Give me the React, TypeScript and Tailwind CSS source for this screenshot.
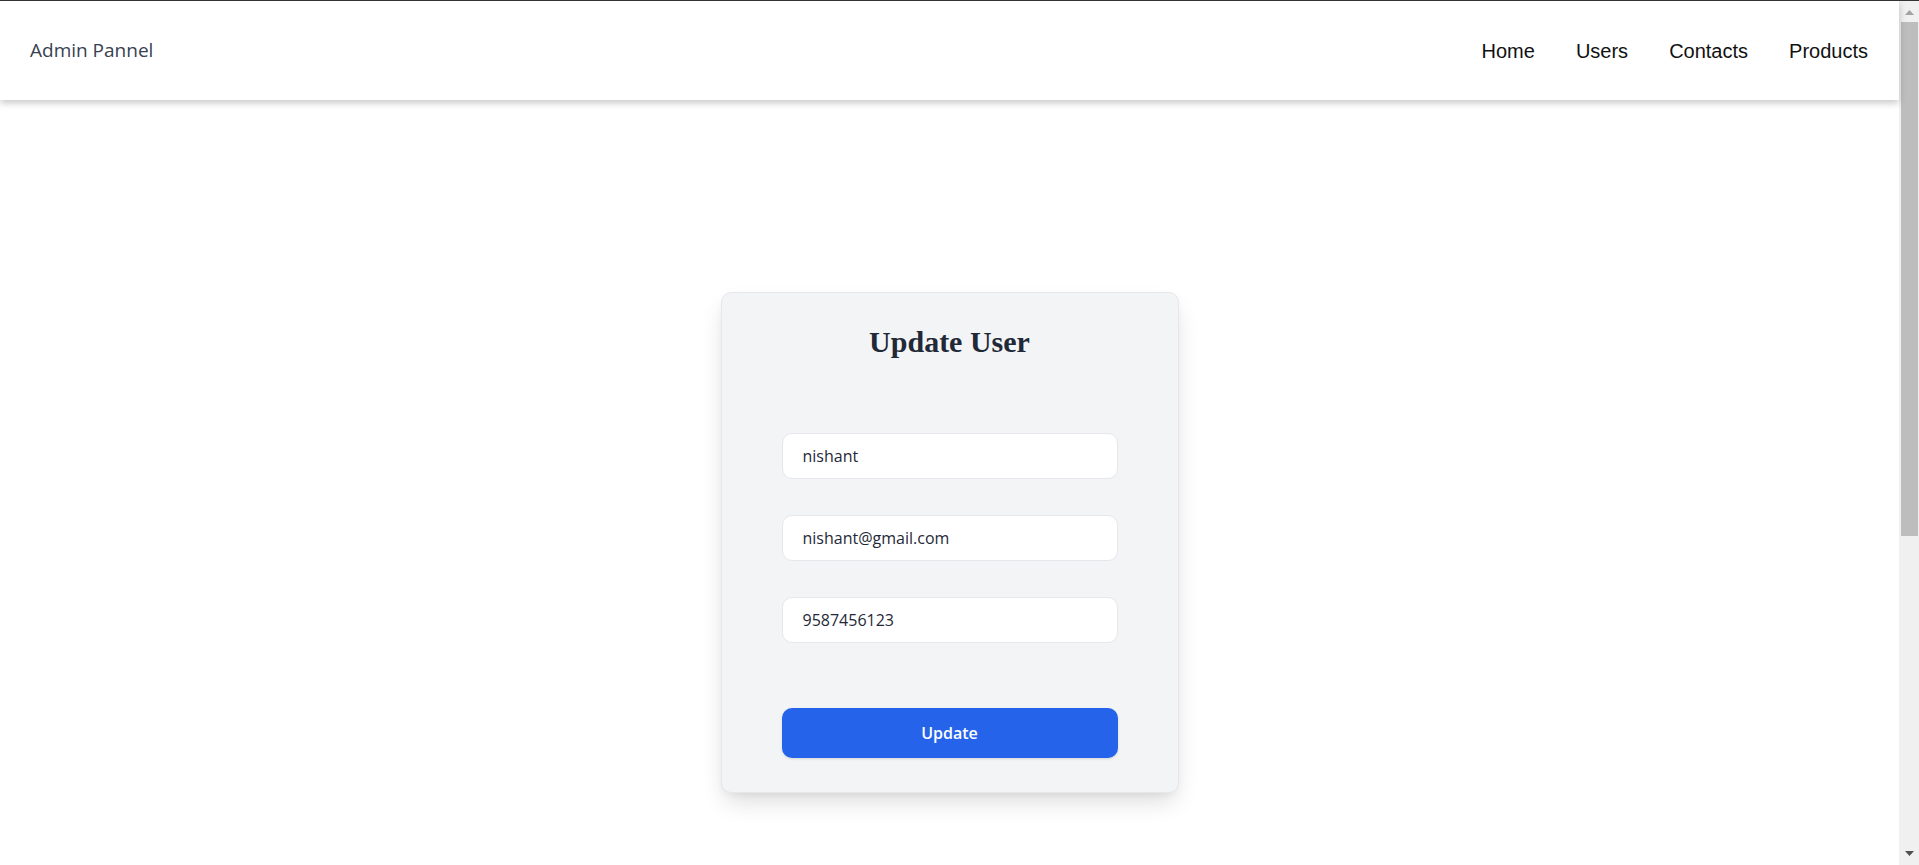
import React, { useState } from 'react';

interface UserFormValues {
    name: string;
    email: string;
    phone: string;
}

const navLinks = ['Home', 'Users', 'Contacts', 'Products'];

const Navbar = () => {
    return (
        <nav className="h-[99px] bg-white flex items-center justify-between pl-[30px] pr-[31px] shadow-[0_3px_7px_rgba(0,0,0,0.22)] relative z-10">
            <span className="text-[19px] text-[#374151]" style={{ fontFamily: '"Open Sans", sans-serif' }}>
                Admin Pannel
            </span>
            <ul className="flex items-center gap-[41px] text-[20px] text-[#111]" style={{ fontFamily: '"Liberation Sans", Arial, sans-serif' }}>
                {navLinks.map((link) => (
                    <li key={link}>
                        <a href="#">{link}</a>
                    </li>
                ))}
            </ul>
        </nav>
    );
};

const UpdateUserForm = () => {
    const [formValues, setFormValues] = useState<UserFormValues>({
        name: 'nishant',
        email: 'nishant@gmail.com',
        phone: '9587456123',
    });

    const handleInputChange = (event: React.ChangeEvent<HTMLInputElement>) => {
        const { name, value } = event.target;
        setFormValues((prev) => ({
            ...prev,
            [name]: value,
        }));
    };

    const handleSubmit = (e: React.FormEvent<HTMLFormElement>) => {
        e.preventDefault();
    };

    const inputClass =
        'block w-full h-[46px] bg-white border border-[#e5e7eb] rounded-[10px] px-5 text-[16px] text-[#1f2937] outline-none';

    return (
        <div className="w-[458px] bg-[#f3f4f6] border border-[#e5e7eb] rounded-[10px] shadow-[0_12px_24px_-4px_rgba(0,0,0,0.14),0_4px_10px_-4px_rgba(0,0,0,0.08)] px-[60px] pt-[31px] pb-[34px]">
            <h2 className="text-[30px] leading-[36px] font-bold text-[#1f2937] text-center" style={{ fontFamily: '"Liberation Serif", "Times New Roman", serif' }}>
                Update User
            </h2>
            <form onSubmit={handleSubmit} className="mt-[73px]" style={{ fontFamily: '"Open Sans", sans-serif' }}>
                <div className="flex flex-col gap-9">
                    <input type="text" name="name" value={formValues.name} onChange={handleInputChange} className={inputClass} />
                    <input type="email" name="email" value={formValues.email} onChange={handleInputChange} className={inputClass} />
                    <input type="text" name="phone" value={formValues.phone} onChange={handleInputChange} className={inputClass} />
                </div>
                <button type="submit"
                    className="mt-[65px] w-full h-[50px] bg-[#2563eb] text-white font-semibold text-[16px] rounded-[10px] shadow-sm">
                    Update
                </button>
            </form>
        </div>
    );
};

const ScrollBar = () => {
    return (
        <div className="w-[20px] shrink-0 bg-[#f0f0f0] flex flex-col">
            <div className="h-[21px] flex justify-center pt-[9px]">
                <svg width="9" height="5" viewBox="0 0 9 5"><path d="M4.5 0 L9 5 L0 5 Z" fill="#a3a3a3" /></svg>
            </div>
            <div className="ml-[2px] w-[17px] h-[514px] bg-[#bdbdbd]" />
            <div className="flex-1 flex justify-center items-end pb-[9px]">
                <svg width="9" height="5" viewBox="0 0 9 5"><path d="M0 0 L9 0 L4.5 5 Z" fill="#505050" /></svg>
            </div>
        </div>
    );
};

const App = () => {
    return (
        <div className="h-screen overflow-hidden border-t border-[#333] flex bg-white">
            <div className="flex-1 flex flex-col min-w-0">
                <Navbar />
                <main className="flex-1 flex justify-center items-start pt-[192px]">
                    <UpdateUserForm />
                </main>
            </div>
            <ScrollBar />
        </div>
    );
};

export default App;
